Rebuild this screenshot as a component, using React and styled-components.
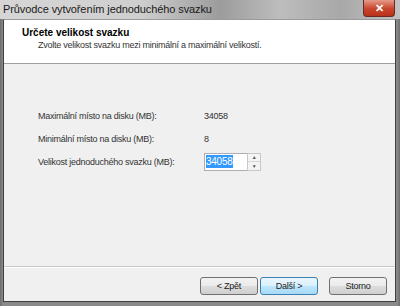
import React from "react";
import styled, { createGlobalStyle } from "styled-components";

const GlobalStyle = createGlobalStyle`
  html, body {
    margin: 0;
    padding: 0;
    background: #5a5a5a;
  }
`;

const Window = styled.div`
  width: 400px;
  height: 306px;
  display: flex;
  flex-direction: column;
  background: linear-gradient(90deg, #6e6e6e 0px, #8a8a8a 3px, #8a8a8a 397px, #6e6e6e 400px);
  font-family: "Liberation Sans", Arial, sans-serif;
  font-size: 9px;
  letter-spacing: -0.25px;
  color: #1e1e1e;
  overflow: hidden;
`;

const TitleBar = styled.div`
  height: 19px;
  display: flex;
  align-items: flex-start;
  justify-content: space-between;
  background: linear-gradient(90deg, #d6d6d6 0%, #cfcfcf 35%, #9c9c9c 55%, #bdbdbd 70%, #a8a8a8 85%, #c2c2c2 100%);
`;

const TitleText = styled.span`
  padding: 3px 0 0 3px;
  font-size: 11px;
  color: #1a1a1a;
  letter-spacing: -0.1px;
`;

const CloseButton = styled.div`
  width: 30px;
  height: 16px;
  margin-right: 5px;
  border: 1px solid #6a2a22;
  border-top: none;
  border-radius: 0 0 4px 4px;
  background: linear-gradient(#e59a88, #c9442c 55%, #b8321c);
  display: flex;
  align-items: center;
  justify-content: center;
  color: #fff;
  font-size: 11px;
  font-weight: bold;
  letter-spacing: 0;
`;

const Client = styled.div`
  flex: 1;
  margin: 0 4px 4px 3px;
  display: flex;
  flex-direction: column;
  border: 1px solid #3f3f3f;
  border-top-color: #9a9a9a;
  background: #f0f0f0;
`;

const Header = styled.div`
  height: 44px;
  background: #fff;
  border-bottom: 1px solid #a0a0a0;
  padding: 7px 0 0 18px;
  box-sizing: border-box;
`;

const HeaderTitle = styled.div`
  font-weight: bold;
  font-size: 10px;
  letter-spacing: 0;
  color: #000;
`;

const HeaderSub = styled.div`
  padding: 2px 0 0 16px;
  color: #333;
`;

const Body = styled.div`
  flex: 1;
  padding: 40px 0 0 34px;
  display: flex;
  flex-direction: column;
`;

const Row = styled.div`
  display: grid;
  grid-template-columns: 166px auto;
  align-items: center;
  height: 23px;
  color: #333;
`;

const SpinWrap = styled.div`
  display: flex;
  align-items: stretch;
  height: 18px;
`;

const Input = styled.div`
  width: 41px;
  border: 1px solid #abadb3;
  border-right: none;
  background: #fff;
  display: flex;
  align-items: center;
  padding-left: 1px;
  font-size: 10px;
`;

const Selected = styled.span`
  background: #3399ff;
  color: #fff;
  padding: 1px 0;
`;

const Spinner = styled.div`
  width: 12px;
  display: flex;
  flex-direction: column;
  border: 1px solid #c8c8c8;
  background: #f4f4f4;
`;

const SpinBtn = styled.div`
  flex: 1;
  display: flex;
  align-items: center;
  justify-content: center;
  font-size: 5px;
  color: #555;
  border-bottom: ${(p) => (p.$top ? "1px solid #d6d6d6" : "none")};
`;

const Footer = styled.div`
  height: 35px;
  border-top: 1px solid #c8c8c8;
  box-shadow: inset 0 1px 0 #fff;
  display: flex;
  align-items: flex-start;
  justify-content: flex-end;
  padding: 10px 8px 0 0;
  box-sizing: border-box;
`;

const Button = styled.div`
  width: 56px;
  height: 16px;
  margin-left: ${(p) => p.$gap}px;
  border: 1px solid ${(p) => (p.$default ? "#3c7fb1" : "#707070")};
  border-radius: 3px;
  background: ${(p) =>
    p.$default
      ? "linear-gradient(#eaf6fd 0%, #d9f0fc 50%, #bee6fd 51%, #a7d9f5 100%)"
      : "linear-gradient(#f2f2f2 0%, #ebebeb 50%, #dddddd 51%, #cfcfcf 100%)"};
  display: flex;
  align-items: center;
  justify-content: center;
  color: #222;
`;

export default function App() {
  return (
    <>
      <GlobalStyle />
      <Window>
        <TitleBar>
          <TitleText>Průvodce vytvořením jednoduchého svazku</TitleText>
          <CloseButton>✕</CloseButton>
        </TitleBar>
        <Client>
          <Header>
            <HeaderTitle>Určete velikost svazku</HeaderTitle>
            <HeaderSub>Zvolte velikost svazku mezi minimální a maximální velikostí.</HeaderSub>
          </Header>
          <Body>
            <Row>
              <span>Maximální místo na disku (MB):</span>
              <span>34058</span>
            </Row>
            <Row>
              <span>Minimální místo na disku (MB):</span>
              <span>8</span>
            </Row>
            <Row>
              <span>Velikost jednoduchého svazku (MB):</span>
              <SpinWrap>
                <Input>
                  <Selected>34058</Selected>
                </Input>
                <Spinner>
                  <SpinBtn $top>▲</SpinBtn>
                  <SpinBtn>▼</SpinBtn>
                </Spinner>
              </SpinWrap>
            </Row>
          </Body>
          <Footer>
            <Button $gap={0}>&lt; Zpět</Button>
            <Button $gap={2} $default>Další &gt;</Button>
            <Button $gap={11}>Storno</Button>
          </Footer>
        </Client>
      </Window>
    </>
  );
}
